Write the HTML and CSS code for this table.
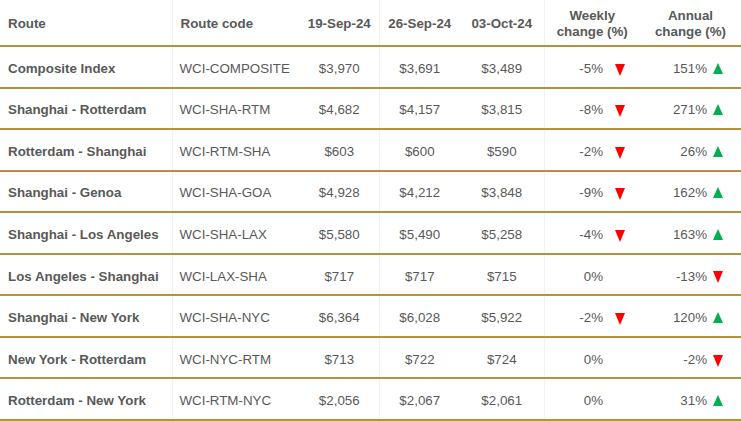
FILE: index.html
```html
<!DOCTYPE html>
<html>
<head>
<meta charset="utf-8">
<link rel="stylesheet" href="styles.css">
</head>
<body>
<table class="wci">
  <colgroup>
    <col class="c-route"><col class="c-code"><col class="c-d1"><col class="c-d2"><col class="c-d3">
    <col class="c-wv"><col class="c-wa"><col class="c-av"><col class="c-aa">
  </colgroup>
  <thead>
    <tr>
      <th class="left">Route</th>
      <th class="left sep">Route code</th>
      <th>19-Sep-24</th>
      <th class="sep">26-Sep-24</th>
      <th>03-Oct-24</th>
      <th class="sep" colspan="2">Weekly<br>change (%)</th>
      <th colspan="2">Annual<br>change (%)</th>
    </tr>
  </thead>
  <tbody>
    <tr><td class="name">Composite Index</td><td class="code sep">WCI-COMPOSITE</td><td>$3,970</td><td class="sep">$3,691</td><td>$3,489</td><td class="val sep">-5%</td><td class="wa"><span class="down"></span></td><td class="val">151%</td><td class="aa"><span class="up"></span></td></tr>
    <tr><td class="name">Shanghai - Rotterdam</td><td class="code sep">WCI-SHA-RTM</td><td>$4,682</td><td class="sep">$4,157</td><td>$3,815</td><td class="val sep">-8%</td><td class="wa"><span class="down"></span></td><td class="val">271%</td><td class="aa"><span class="up"></span></td></tr>
    <tr><td class="name">Rotterdam - Shanghai</td><td class="code sep">WCI-RTM-SHA</td><td>$603</td><td class="sep">$600</td><td>$590</td><td class="val sep">-2%</td><td class="wa"><span class="down"></span></td><td class="val">26%</td><td class="aa"><span class="up"></span></td></tr>
    <tr><td class="name">Shanghai - Genoa</td><td class="code sep">WCI-SHA-GOA</td><td>$4,928</td><td class="sep">$4,212</td><td>$3,848</td><td class="val sep">-9%</td><td class="wa"><span class="down"></span></td><td class="val">162%</td><td class="aa"><span class="up"></span></td></tr>
    <tr><td class="name">Shanghai - Los Angeles</td><td class="code sep">WCI-SHA-LAX</td><td>$5,580</td><td class="sep">$5,490</td><td>$5,258</td><td class="val sep">-4%</td><td class="wa"><span class="down"></span></td><td class="val">163%</td><td class="aa"><span class="up"></span></td></tr>
    <tr><td class="name">Los Angeles - Shanghai</td><td class="code sep">WCI-LAX-SHA</td><td>$717</td><td class="sep">$717</td><td>$715</td><td class="val sep">0%</td><td class="wa"></td><td class="val">-13%</td><td class="aa"><span class="down"></span></td></tr>
    <tr><td class="name">Shanghai - New York</td><td class="code sep">WCI-SHA-NYC</td><td>$6,364</td><td class="sep">$6,028</td><td>$5,922</td><td class="val sep">-2%</td><td class="wa"><span class="down"></span></td><td class="val">120%</td><td class="aa"><span class="up"></span></td></tr>
    <tr><td class="name">New York - Rotterdam</td><td class="code sep">WCI-NYC-RTM</td><td>$713</td><td class="sep">$722</td><td>$724</td><td class="val sep">0%</td><td class="wa"></td><td class="val">-2%</td><td class="aa"><span class="down"></span></td></tr>
    <tr><td class="name">Rotterdam - New York</td><td class="code sep">WCI-RTM-NYC</td><td>$2,056</td><td class="sep">$2,067</td><td>$2,061</td><td class="val sep">0%</td><td class="wa"></td><td class="val">31%</td><td class="aa"><span class="up"></span></td></tr>
  </tbody>
</table>
</body>
</html>
```

FILE: styles.css
```css
html, body {
  margin: 0;
  padding: 0;
  background: #ffffff;
}
.wci {
  width: 741px;
  table-layout: fixed;
  border-collapse: collapse;
  font-family: "Liberation Sans", Arial, sans-serif;
  font-size: 13.33px;
  color: #595959;
}
.c-route { width: 172px; }
.c-code { width: 128px; }
.c-d1 { width: 79px; }
.c-d2 { width: 81px; }
.c-d3 { width: 84px; }
.c-wv { width: 64px; }
.c-wa { width: 32px; }
.c-av { width: 72px; }
.c-aa { width: 29px; }

.wci th {
  height: 42px;
  padding: 3px 0 0;
  font-weight: bold;
  text-align: center;
  vertical-align: middle;
  line-height: 16px;
  border-bottom: 2px solid #b8923b;
}
.wci td {
  height: 36.56px;
  padding: 3px 0 0;
  text-align: center;
  vertical-align: middle;
  border-bottom: 2px solid #b8923b;
  white-space: nowrap;
}
.wci .left { text-align: left; padding-left: 8px; }
.wci .sep { border-left: 1px solid #f2f2f2; }
.wci td.name { text-align: left; padding-left: 8px; font-weight: bold; }
.wci td.code { text-align: left; padding-left: 7px; }
.wci td.val { text-align: right; padding-right: 5px; }
.wci td.wa { text-align: left; padding-left: 7px; }
.wci td.aa { text-align: left; padding-left: 1px; }

.down, .up {
  display: inline-block;
  width: 0;
  height: 0;
  vertical-align: middle;
  border-left: 5.5px solid transparent;
  border-right: 5.5px solid transparent;
}
.down {
  border-top: 12px solid #ff0000;
  margin-top: 1px;
}
.up {
  border-bottom: 11px solid #00b050;
  margin-top: -2px;
}
```
